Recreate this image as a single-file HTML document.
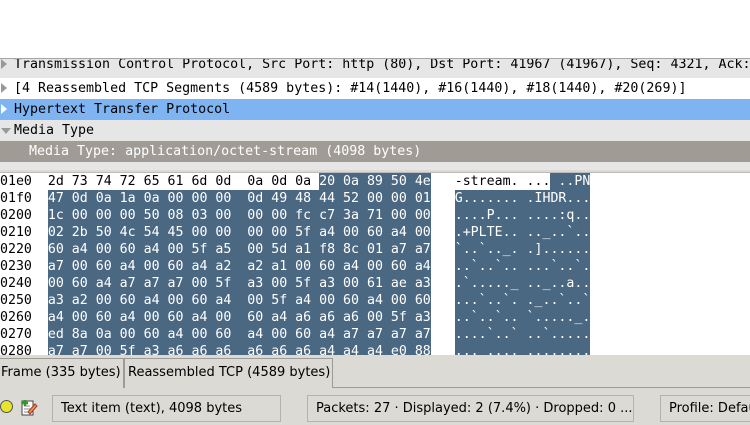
<!DOCTYPE html>
<html><head><style>
*{margin:0;padding:0;box-sizing:border-box}
body{width:750px;height:425px;overflow:hidden;background:#dcdad5;position:relative;font-family:"DejaVu Sans Mono","Liberation Mono",monospace;font-size:13.3px}
.top{position:absolute;left:0;top:0;width:750px;height:58px;background:#fff}
.tree{position:absolute;left:0;top:58px;width:750px;height:112px;background:#e6e6e6;border-top:1px solid #a8a6a2;overflow:hidden}
.r{position:absolute;left:0;width:750px;height:21px;line-height:21px;white-space:pre;color:#000}
.r b{font-weight:normal;position:absolute;left:14px}
.hex{position:absolute;left:0;top:172px;width:750px;height:183px;background:#fff;overflow:hidden;border-top:1px solid #bbb;font-size:13.25px}
.hl{position:absolute;height:17px;line-height:17px;white-space:pre;color:#000}
.sel{background:#4b6883;color:#fff;display:inline-block;height:17px;vertical-align:top}
.sans{font-family:"DejaVu Sans","Liberation Sans",sans-serif}
.tab{position:absolute;top:358px;height:30px;line-height:28px;font-size:13px;border:1px solid #9e9b96;border-bottom:none;background:#dcdad5;padding-left:1px;white-space:nowrap}
.box{position:absolute;top:395px;height:27px;line-height:26px;font-size:13px;border:1px solid #b5b2ac;padding-left:8px;background:#dcdad5;white-space:nowrap;overflow:hidden}
.t{position:absolute;left:1px;top:5px;width:0;height:0;border-top:5px solid transparent;border-bottom:5px solid transparent;border-left:6px solid #999}
</style></head><body>
<div class="top"></div>
<div class="tree">
<div class="r" style="top:-2px;height:20px;line-height:16px"><span class="t" style="top:2px"></span><b>Transmission Control Protocol, Src Port: http (80), Dst Port: 41967 (41967), Seq: 4321, Ack:</b></div>
<div class="r" style="top:19px;background:#fff"><span class="t"></span><b>[4 Reassembled TCP Segments (4589 bytes): #14(1440), #16(1440), #18(1440), #20(269)]</b></div>
<div class="r" style="top:40px;background:#7fb4f3"><span class="t" style="border-left-color:#fff"></span><b>Hypertext Transfer Protocol</b></div>
<div class="r" style="top:61px"><span style="position:absolute;left:1px;top:8px;border-left:5px solid transparent;border-right:5px solid transparent;border-top:6px solid #999"></span><b>Media Type</b></div>
<div class="r" style="top:82px;background:#a09c95;color:#fff"><b style="left:29px">Media Type: application/octet-stream (4098 bytes)</b></div>
</div>
<div class="hex">
<div class="hl" style="top:0;left:0">01e0  2d 73 74 72 65 61 6d 0d  0a 0d 0a <span class="sel">20 0a 89 50 4e</span>   -stream. ...<span class="sel"> ..PN</span></div>
<div class="hl" style="top:17px;left:0">01f0  <span class="sel">47 0d 0a 1a 0a 00 00 00  0d 49 48 44 52 00 00 01</span>   <span class="sel">G....... .IHDR...</span></div>
<div class="hl" style="top:34px;left:0">0200  <span class="sel">1c 00 00 00 50 08 03 00  00 00 fc c7 3a 71 00 00</span>   <span class="sel">....P... ....:q..</span></div>
<div class="hl" style="top:51px;left:0">0210  <span class="sel">02 2b 50 4c 54 45 00 00  00 00 5f a4 00 60 a4 00</span>   <span class="sel">.+PLTE.. .._..`..</span></div>
<div class="hl" style="top:68px;left:0">0220  <span class="sel">60 a4 00 60 a4 00 5f a5  00 5d a1 f8 8c 01 a7 a7</span>   <span class="sel">`..`.._. .]......</span></div>
<div class="hl" style="top:85px;left:0">0230  <span class="sel">a7 00 60 a4 00 60 a4 a2  a2 a1 00 60 a4 00 60 a4</span>   <span class="sel">..`..`.. ...`..`.</span></div>
<div class="hl" style="top:102px;left:0">0240  <span class="sel">00 60 a4 a7 a7 a7 00 5f  a3 00 5f a3 00 61 ae a3</span>   <span class="sel">.`....._ .._..a..</span></div>
<div class="hl" style="top:119px;left:0">0250  <span class="sel">a3 a2 00 60 a4 00 60 a4  00 5f a4 00 60 a4 00 60</span>   <span class="sel">...`..`. ._..`..`</span></div>
<div class="hl" style="top:136px;left:0">0260  <span class="sel">a4 00 60 a4 00 60 a4 00  60 a4 a6 a6 a6 00 5f a3</span>   <span class="sel">..`..`.. `....._.</span></div>
<div class="hl" style="top:153px;left:0">0270  <span class="sel">ed 8a 0a 00 60 a4 00 60  a4 00 60 a4 a7 a7 a7 a7</span>   <span class="sel">....`..` ..`.....</span></div>
<div class="hl" style="top:170px;left:0">0280  <span class="sel">a7 a7 00 5f a3 a6 a6 a6  a6 a6 a6 a4 a4 a4 e0 88</span>   <span class="sel">..._.... ........</span></div>
</div>
<div style="position:absolute;left:0;top:387px;width:750px;height:1px;background:#9e9b96"></div>
<div class="tab sans" style="left:-1px;width:125px">Frame (335 bytes)</div>
<div class="tab sans" style="left:124px;width:209px;padding-left:3px">Reassembled TCP (4589 bytes)</div>
<div style="position:absolute;left:0;top:400px;width:13px;height:13px;border-radius:50%;background:#e5e52a;border:1px solid #555"></div>
<svg style="position:absolute;left:20px;top:398px" width="18" height="19" viewBox="0 0 18 19"><rect x="2" y="3" width="11" height="14" fill="#fff" stroke="#444"/><path d="M4 8h6M4 11h6M4 14h5" stroke="#888"/><path d="M5 2v6M2 5h6" stroke="#2a9a2a" stroke-width="2.5"/><path d="M8 14l7-8 2 2-7 8z" fill="#e89a3a" stroke="#a33"/></svg>
<div class="box sans" style="left:52px;width:229px">Text item (text), 4098 bytes</div>
<div class="box sans" style="left:307px;width:327px">Packets: 27 · Displayed: 2 (7.4%) · Dropped: 0 ...</div>
<div class="box sans" style="left:660px;width:100px">Profile: Default</div>
</body></html>
